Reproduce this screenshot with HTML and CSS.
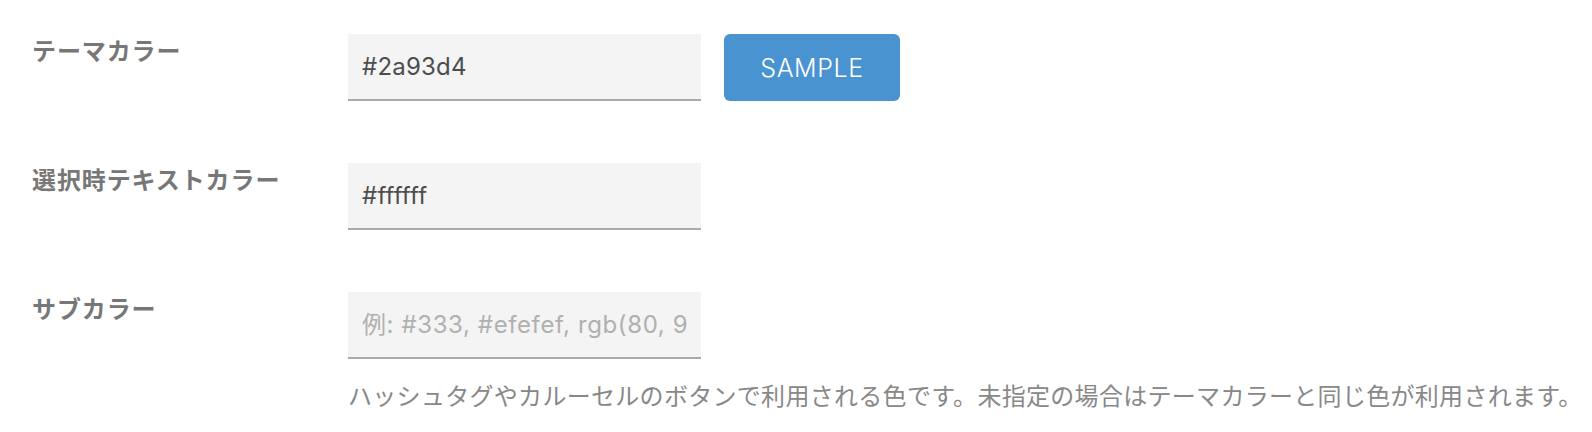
FILE: index.html
```html
<!DOCTYPE html>
<html lang="ja">
<head>
<meta charset="utf-8">
<title>カラー設定</title>
<link rel="stylesheet" href="styles.css">
</head>
<body>
<form class="settings">
  <div class="row">
    <label class="label" for="theme">テーマカラー</label>
    <div class="field">
      <div class="controls">
        <input class="text-input" id="theme" type="text" value="#2a93d4">
        <button class="sample-btn" type="button">SAMPLE</button>
      </div>
    </div>
  </div>
  <div class="row">
    <label class="label" for="selected">選択時テキストカラー</label>
    <div class="field">
      <div class="controls">
        <input class="text-input" id="selected" type="text" value="#ffffff">
      </div>
    </div>
  </div>
  <div class="row">
    <label class="label" for="sub">サブカラー</label>
    <div class="field">
      <div class="controls">
        <input class="text-input" id="sub" type="text" placeholder="例: #333, #efefef, rgb(80, 90, 100)">
      </div>
      <p class="help">ハッシュタグやカルーセルのボタンで利用される色です。未指定の場合はテーマカラーと同じ色が利用されます。</p>
    </div>
  </div>
</form>
</body>
</html>
```

FILE: styles.css
```css
html, body {
  margin: 0;
  padding: 0;
  background: #ffffff;
}

body {
  font-family: Inter, "Noto Sans CJK JP", sans-serif;
  color: #555555;
}

.settings {
  padding: 34px 0 0 32px;
}

.row {
  display: grid;
  grid-template-columns: 316px auto;
  margin-bottom: 62px;
}

.row:last-child {
  margin-bottom: 0;
}

.label {
  font-family: "Noto Sans CJK JP", sans-serif;
  font-weight: 700;
  font-size: 24px;
  letter-spacing: 0.9px;
  line-height: 32px;
  color: #777777;
}

.controls {
  display: flex;
  align-items: flex-start;
  gap: 23px;
}

.text-input {
  box-sizing: border-box;
  width: 353px;
  height: 67px;
  margin: 0;
  padding: 0 13px 0 14px;
  border: none;
  border-bottom: 2px solid #aaaaaa;
  border-radius: 0;
  background: #f4f4f4;
  font-family: Inter, "Noto Sans CJK JP", sans-serif;
  font-size: 24px;
  letter-spacing: 0.2px;
  color: #4d4d4d;
  outline: none;
}

.text-input::placeholder {
  color: #b0b0b0;
  letter-spacing: 0.6px;
}

.sample-btn {
  box-sizing: border-box;
  width: 176px;
  height: 67px;
  margin: 0;
  padding: 0;
  border: none;
  border-radius: 6px;
  background: #4993d1;
  color: #ffffff;
  font-family: Inter, sans-serif;
  font-size: 25px;
  letter-spacing: 0.6px;
  font-weight: 300;
}

.help {
  margin: 18px 0 0 0;
  font-family: "Noto Sans CJK JP", sans-serif;
  font-size: 24px;
  letter-spacing: 0.3px;
  line-height: 36px;
  color: #888888;
  white-space: nowrap;
}
```
